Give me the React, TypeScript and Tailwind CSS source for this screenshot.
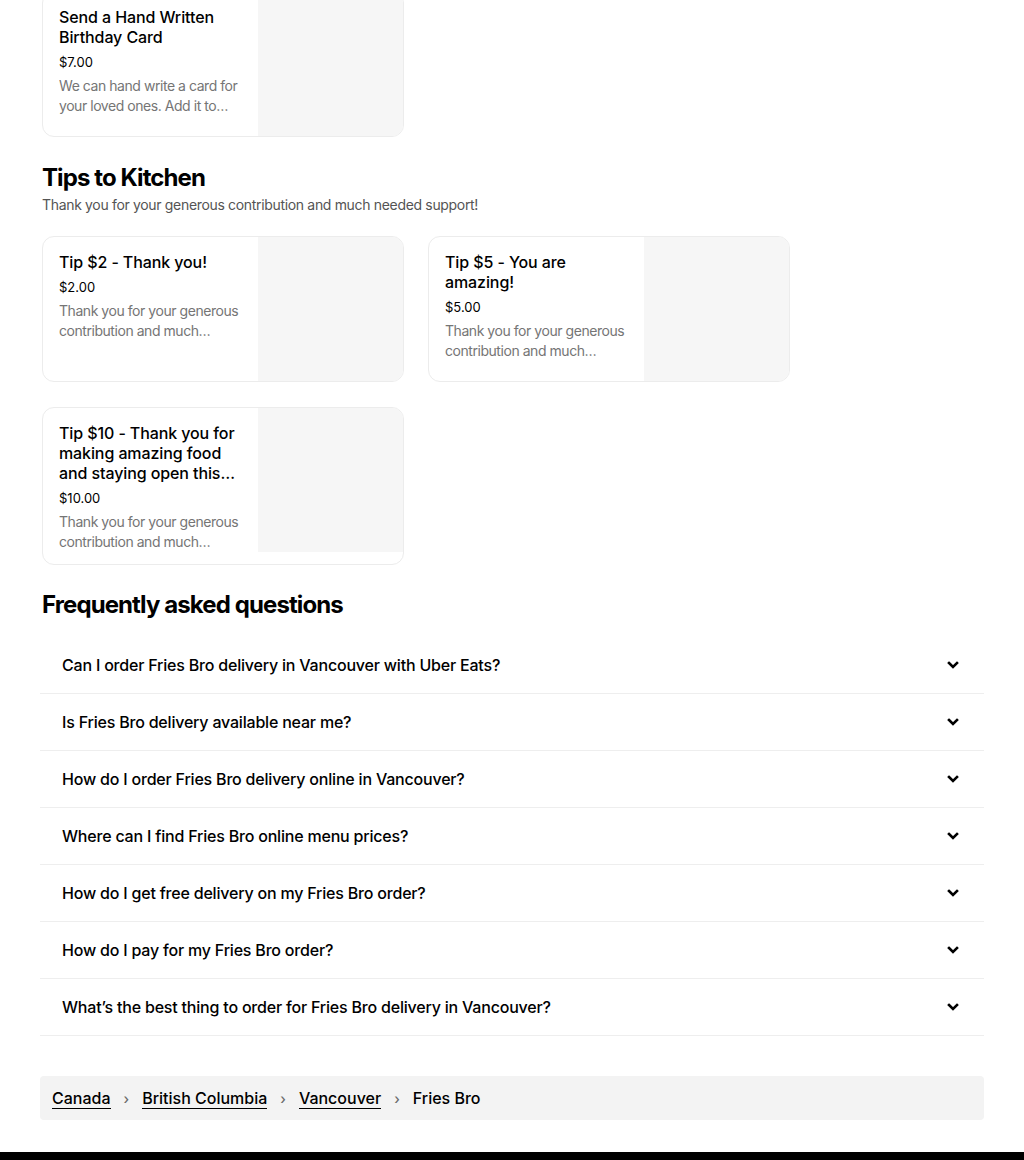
import React from "react";

type Item = { title: string; price: string; desc: string };

function Card({ item }: { item: Item }) {
  return (
    <div className="flex h-fit min-h-[146px] overflow-hidden rounded-xl border border-[#ececec] bg-white">
      <div className="flex w-[215px] shrink-0 flex-col px-4 pt-[15px] pb-3">
        <div className="line-clamp-3 text-[16px] leading-5 font-medium tracking-[-0.1px] text-black">{item.title}</div>
        <div className="mt-[5px] text-[13px] leading-5 text-black">{item.price}</div>
        <div className="mt-1 line-clamp-2 text-[14px] leading-5 tracking-[-0.45px] text-[#757575]">{item.desc}</div>
      </div>
      <div className="h-[144px] flex-1 bg-[#f6f6f6]" />
    </div>
  );
}

function Chevron() {
  return (
    <svg width="14" height="14" viewBox="0 0 14 14" className="shrink-0">
      <path d="M3 5 L7 9 L11 5" fill="none" stroke="#000" strokeWidth="2.6" strokeLinecap="square" />
    </svg>
  );
}

const faqs = [
  "Can I order Fries Bro delivery in Vancouver with Uber Eats?",
  "Is Fries Bro delivery available near me?",
  "How do I order Fries Bro delivery online in Vancouver?",
  "Where can I find Fries Bro online menu prices?",
  "How do I get free delivery on my Fries Bro order?",
  "How do I pay for my Fries Bro order?",
  "What’s the best thing to order for Fries Bro delivery in Vancouver?",
];

const tipDesc = "Thank you for your generous contribution and much needed support!";

export default function App() {
  return (
    <div className="min-h-[1160px] bg-white text-black" style={{ fontFamily: "Inter, 'Noto Sans', sans-serif" }}>
      <div className="px-10 pt-0">
        <div className="-mt-[9px] grid grid-cols-[362px_362px] gap-6 pl-[2px]">
          <Card
            item={{
              title: "Send a Hand Written Birthday Card",
              price: "$7.00",
              desc: "We can hand write a card for your loved ones. Add it to your order and we'll include it.",
            }}
          />
        </div>

        <div className="mt-[25px] pl-[2px]">
          <h2 className="text-[24px] leading-8 font-bold tracking-[-0.9px]">Tips to Kitchen</h2>
          <p className="mt-[1px] text-[14px] leading-5 tracking-[-0.33px] text-[#545454]">{tipDesc}</p>
        </div>

        <div className="mt-[21px] grid grid-cols-[362px_362px] gap-x-6 gap-y-[25px] pl-[2px]">
          <Card item={{ title: "Tip $2 - Thank you!", price: "$2.00", desc: tipDesc }} />
          <Card item={{ title: "Tip $5 - You are amazing!", price: "$5.00", desc: tipDesc }} />
          <Card
            item={{
              title: "Tip $10 - Thank you for making amazing food and staying open this time",
              price: "$10.00",
              desc: tipDesc,
            }}
          />
        </div>

        <h2 className="mt-[24px] pl-[2px] text-[24px] leading-8 font-bold tracking-[-0.9px]">Frequently asked questions</h2>

        <div className="mt-[16px]">
          {faqs.map((q) => (
            <div key={q} className="flex h-[57px] items-center justify-between border-b border-[#eeeeee] pr-6 pl-[22px]">
              <span className="text-[16px] font-medium tracking-[-0.2px]">{q}</span>
              <Chevron />
            </div>
          ))}
        </div>

        <div className="mt-[40px] flex h-[44px] items-center gap-0 rounded bg-[#f3f3f3] px-3 text-[16px] font-medium">
          <span className="border-b border-black leading-5">Canada</span>
          <span className="mx-[13px] text-[14px] text-[#6b6b6b]">›</span>
          <span className="border-b border-black leading-5">British Columbia</span>
          <span className="mx-[13px] text-[14px] text-[#6b6b6b]">›</span>
          <span className="border-b border-black leading-5">Vancouver</span>
          <span className="mx-[13px] text-[14px] text-[#6b6b6b]">›</span>
          <span className="leading-5">Fries Bro</span>
        </div>
      </div>
      <div className="mt-[32px] h-[8px] bg-black" />
    </div>
  );
}
